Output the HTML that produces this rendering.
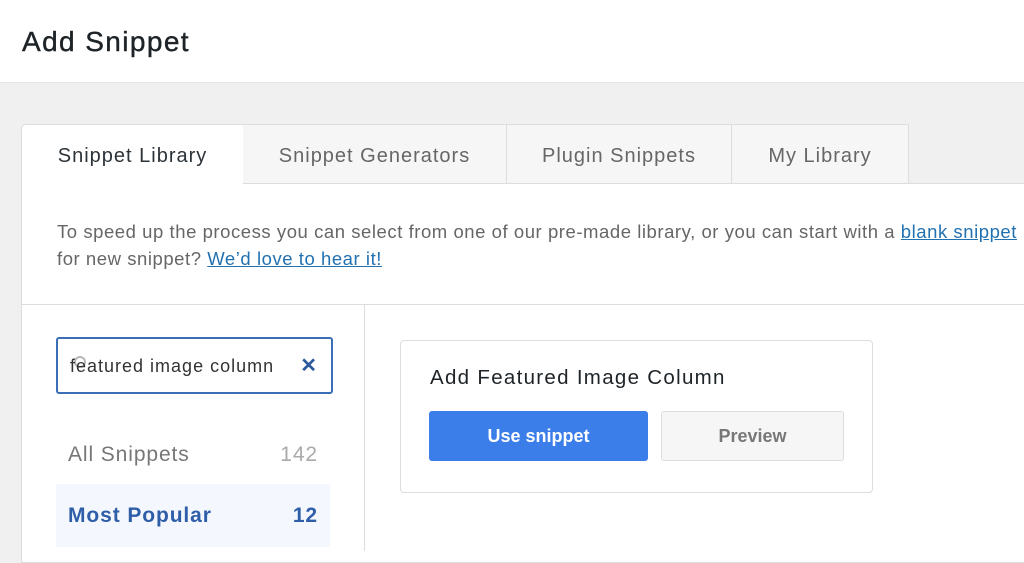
<!DOCTYPE html>
<html><head><meta charset="utf-8"><style>
*{box-sizing:border-box;margin:0;padding:0}
body{width:1024px;height:551px;overflow:hidden;background:#f0f0f1;font-family:"Liberation Sans",sans-serif;position:relative;color:#3c434a}
.hdr{position:absolute;left:0;top:0;width:1024px;height:83px;background:#fff;border-bottom:1px solid #e2e4e7}
.hdr h1{position:absolute;left:22px;top:26px;font-size:28px;font-weight:normal;color:#1d2327;letter-spacing:1.4px;-webkit-text-stroke:0.4px #1d2327}
.panel{position:absolute;left:21px;top:183px;width:1010px;height:380px;background:#fff;border:1px solid #ddd}
.tab{position:absolute;top:124px;height:60px;background:#f6f6f7;border:1px solid #ddd;font-size:20px;color:#666;line-height:62px;text-align:center;letter-spacing:1px}
.tab.a{background:#fff;border-bottom:none;height:61px;color:#2c3338;border-radius:5px 0 0 0}
.desc{position:absolute;left:57px;top:218px;font-size:18.5px;line-height:27px;color:#666;white-space:nowrap;letter-spacing:0.55px}
.desc a{color:#2271b1;text-decoration:underline}
.hr{position:absolute;left:22px;top:304px;width:1002px;height:1px;background:#ddd}
.side{position:absolute;left:364px;top:305px;width:1px;height:246px;background:#ddd}
.search{position:absolute;left:56px;top:337px;width:277px;height:57px;border:2px solid #3a6fb5;border-radius:3px;background:#fff}
.search span{position:absolute;left:12px;top:17px;font-size:18px;color:#333;letter-spacing:1px}
.search .mg{position:absolute;left:16px;top:17px;width:12px;height:12px;border:2px solid #999;border-radius:50%;opacity:.7}
.search b{position:absolute;right:14px;top:14px;font-size:20px;color:#2d5a9e}
.cat{position:absolute;left:56px;width:274px;height:63px;font-size:21px;line-height:63px;padding:0 12px;letter-spacing:0.9px}
.cat i{font-style:normal;position:absolute;right:12px}
.card{position:absolute;left:400px;top:340px;width:473px;height:153px;border:1px solid #ddd;border-radius:4px;background:#fff}
.card h3{position:absolute;left:29px;top:25px;font-size:20.5px;font-weight:normal;color:#1d2327;letter-spacing:1.3px}
.btn{position:absolute;top:70px;height:50px;border-radius:3px;font-size:18px;font-weight:bold;text-align:center;line-height:50px}
</style></head><body>
<div class="hdr"><h1>Add Snippet</h1></div>
<div class="panel"></div>
<div class="tab" style="left:242px;width:265px">Snippet Generators</div>
<div class="tab" style="left:506px;width:226px">Plugin Snippets</div>
<div class="tab" style="left:731px;width:178px">My Library</div>
<div class="tab a" style="left:21px;width:222px;border-right:none">Snippet Library</div>
<div class="desc">To speed up the process you can select from one of our pre-made library, or you can start with a <a>blank snippet</a><br>for new snippet? <a>We’d love to hear it!</a></div>
<div class="hr"></div>
<div class="side"></div>
<div class="search"><div class="mg"></div><span>featured image column</span><b>✕</b></div>
<div class="cat" style="top:423px;color:#777">All Snippets<i style="color:#aaa">142</i></div>
<div class="cat" style="top:484px;background:#f4f8fe;color:#2f5ea8;font-weight:bold">Most Popular<i>12</i></div>
<div class="card"><h3>Add Featured Image Column</h3>
<div class="btn" style="left:28px;width:219px;background:#3b7de9;color:#fff">Use snippet</div>
<div class="btn" style="left:260px;width:183px;background:#f6f6f6;border:1px solid #ddd;color:#777;line-height:48px">Preview</div>
</div>
</body></html>
